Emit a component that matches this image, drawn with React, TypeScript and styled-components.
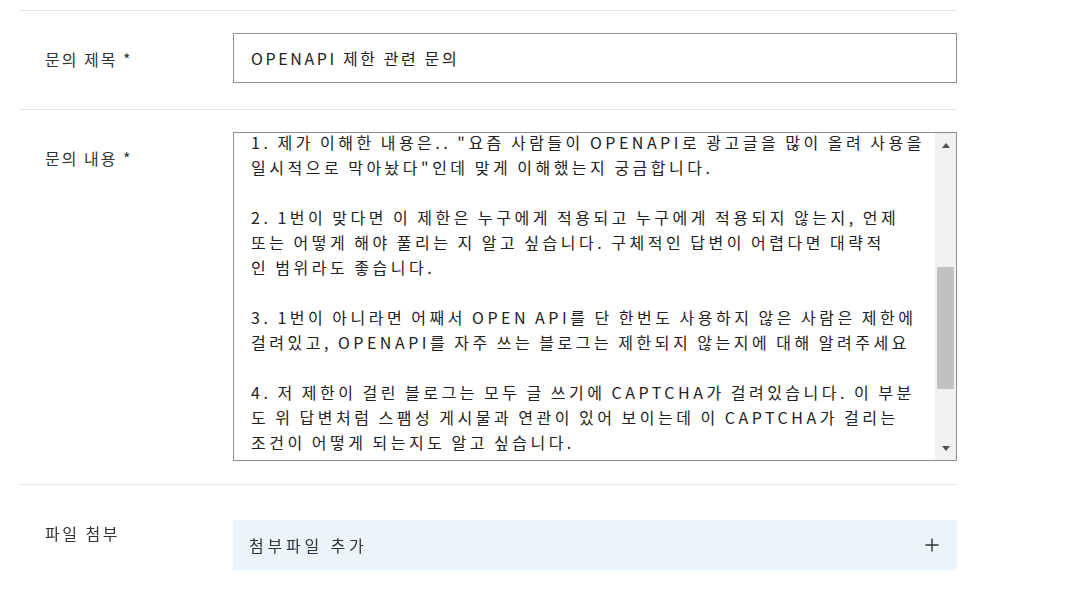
import { useCallback, useEffect, useRef, useState } from 'react'
import styled, { createGlobalStyle } from 'styled-components'

const GlobalStyle = createGlobalStyle`
  html, body {
    margin: 0;
    padding: 0;
    background: #fff;
  }
  body {
    font-family: "Noto Sans CJK KR", "Noto Sans", sans-serif;
    color: #333;
  }
`

const Form = styled.div`
  width: 938px;
  margin: 10px 0 0 19px;
`

const Row = styled.div`
  display: grid;
  grid-template-columns: 214px 1fr;
  align-items: start;
  border-top: 1px solid #e6e6e6;
`

const Label = styled.div<{ $spacing?: number }>`
  padding: 37px 0 0 26px;
  font-size: 16px;
  line-height: 22px;
  letter-spacing: ${(p) => p.$spacing ?? 2}px;
  color: #333;
`

const Field = styled.div<{ $top: number; $bottom: number }>`
  padding-top: ${(p) => p.$top}px;
  padding-bottom: ${(p) => p.$bottom}px;
`

const TextInput = styled.input`
  box-sizing: border-box;
  display: block;
  width: 100%;
  height: 50px;
  margin: 0;
  padding: 0 17px;
  border: 1px solid #8f8f8f;
  border-radius: 0;
  font-family: inherit;
  font-size: 16px;
  letter-spacing: 2.6px;
  color: #222;
  outline: none;
`

const ScrollFrame = styled.div`
  box-sizing: border-box;
  display: flex;
  height: 329px;
  border: 1px solid #8f8f8f;
`

const TextArea = styled.textarea`
  box-sizing: border-box;
  flex: 1;
  min-width: 0;
  height: 100%;
  margin: 0;
  padding: 26px 2px 13px 17px;
  border: none;
  resize: none;
  font-family: inherit;
  font-size: 16px;
  line-height: 25px;
  letter-spacing: 3.5px;
  word-spacing: -1px;
  color: #222;
  outline: none;
  overflow-y: scroll;
  scrollbar-width: none;

  &::-webkit-scrollbar {
    display: none;
  }
`

const ScrollBar = styled.div`
  display: flex;
  flex-direction: column;
  width: 21px;
  background: #f1f1f1;
`

const ArrowButton = styled.button<{ $down?: boolean }>`
  display: flex;
  align-items: center;
  justify-content: center;
  width: 21px;
  height: 21px;
  padding: ${(p) => (p.$down ? '0 0 2px' : '3px 0 0')};
  border: none;
  background: transparent;
  cursor: default;

  &::before {
    content: '';
    width: 0;
    height: 0;
    border-left: 4.5px solid transparent;
    border-right: 4.5px solid transparent;
    ${(p) =>
      p.$down ? 'border-top: 5px solid #505050;' : 'border-bottom: 5px solid #505050;'}
  }
`

const Track = styled.div`
  flex: 1;
  padding: 0 2px;
`

const Thumb = styled.div`
  background: #c1c1c1;
`

const AttachBox = styled.div`
  display: flex;
  align-items: center;
  justify-content: space-between;
  height: 50px;
  padding: 0 18px 0 16px;
  background: #eaf4fd;
  font-size: 16px;
  letter-spacing: 3.8px;
  color: #333;
  cursor: pointer;
`

const PlusIcon = () => (
  <svg width="14" height="14" viewBox="0 0 14 14" fill="none">
    <path d="M7 0.5v13M0.5 7h13" stroke="#333" strokeWidth="1.4" />
  </svg>
)

const BODY = [
  '안녕하세요.',
  '블로그에서 OPENAPI를 이용하고 있는 사용자입니다.',
  '',
  '며칠 전부터 블로그 글쓰기가 제한되었다는 안내가 나오고 있습니다.',
  '안내 문구에는 OPENAPI 이용이 일시적으로 제한되었다고',
  '되어 있는데 이유를 잘 모르겠습니다.',
  '',
  '주변에도 같은 제한을 받은 블로그가 여러 곳 있어서',
  '아래 내용을 여쭤보고 싶습니다.',
  '',
  '',
  '1. 제가 이해한 내용은.. "요즘 사람들이 OPENAPI로 광고글을 많이 올려 사용을',
  '일시적으로 막아놨다"인데 맞게 이해했는지 궁금합니다.',
  '',
  '2. 1번이 맞다면 이 제한은 누구에게 적용되고 누구에게 적용되지 않는지, 언제',
  '또는 어떻게 해야 풀리는 지 알고 싶습니다. 구체적인 답변이 어렵다면 대략적',
  '인 범위라도 좋습니다.',
  '',
  '3. 1번이 아니라면 어째서 OPEN API를 단 한번도 사용하지 않은 사람은 제한에',
  '걸려있고, OPENAPI를 자주 쓰는 블로그는 제한되지 않는지에 대해 알려주세요',
  '',
  '4. 저 제한이 걸린 블로그는 모두 글 쓰기에 CAPTCHA가 걸려있습니다. 이 부분',
  '도 위 답변처럼 스팸성 게시물과 연관이 있어 보이는데 이 CAPTCHA가 걸리는',
  '조건이 어떻게 되는지도 알고 싶습니다.',
  '',
  '번거로우시겠지만 확인 부탁드립니다.',
  '',
  '감사합니다.',
  '수고하세요.',
].join('\n')

const BUTTON = 21

function ScrollingTextArea({ value, initialScroll }: { value: string; initialScroll: number }) {
  const areaRef = useRef<HTMLTextAreaElement>(null)
  const [thumb, setThumb] = useState({ top: 0, height: 0 })

  const measure = useCallback(() => {
    const el = areaRef.current
    if (!el) return
    const track = el.clientHeight - BUTTON * 2
    const ratio = el.clientHeight / el.scrollHeight
    const height = Math.max(17, Math.round(track * ratio))
    const max = el.scrollHeight - el.clientHeight
    const top = max > 0 ? Math.round(((track - height) * el.scrollTop) / max) : 0
    setThumb({ top, height })
  }, [])

  useEffect(() => {
    const el = areaRef.current
    if (!el) return
    el.scrollTop = initialScroll
    measure()
  }, [initialScroll, measure])

  const step = (dy: number) => {
    if (areaRef.current) areaRef.current.scrollTop += dy
  }

  return (
    <ScrollFrame>
      <TextArea ref={areaRef} defaultValue={value} onScroll={measure} />
      <ScrollBar>
        <ArrowButton type="button" aria-label="위로" onClick={() => step(-40)} />
        <Track>
          <Thumb style={{ marginTop: thumb.top, height: thumb.height }} />
        </Track>
        <ArrowButton type="button" $down aria-label="아래로" onClick={() => step(40)} />
      </ScrollBar>
    </ScrollFrame>
  )
}

export default function App() {
  return (
    <>
      <GlobalStyle />
      <Form>
        <Row>
          <Label>문의 제목 *</Label>
          <Field $top={22} $bottom={26}>
            <TextInput defaultValue="OPENAPI 제한 관련 문의" />
          </Field>
        </Row>
        <Row>
          <Label>문의 내용 *</Label>
          <Field $top={22} $bottom={23}>
            <ScrollingTextArea value={BODY} initialScroll={304} />
          </Field>
        </Row>
        <Row>
          <Label $spacing={2.5}>파일 첨부</Label>
          <Field $top={35} $bottom={34}>
            <AttachBox>
              <span>첨부파일 추가</span>
              <PlusIcon />
            </AttachBox>
          </Field>
        </Row>
      </Form>
    </>
  )
}
